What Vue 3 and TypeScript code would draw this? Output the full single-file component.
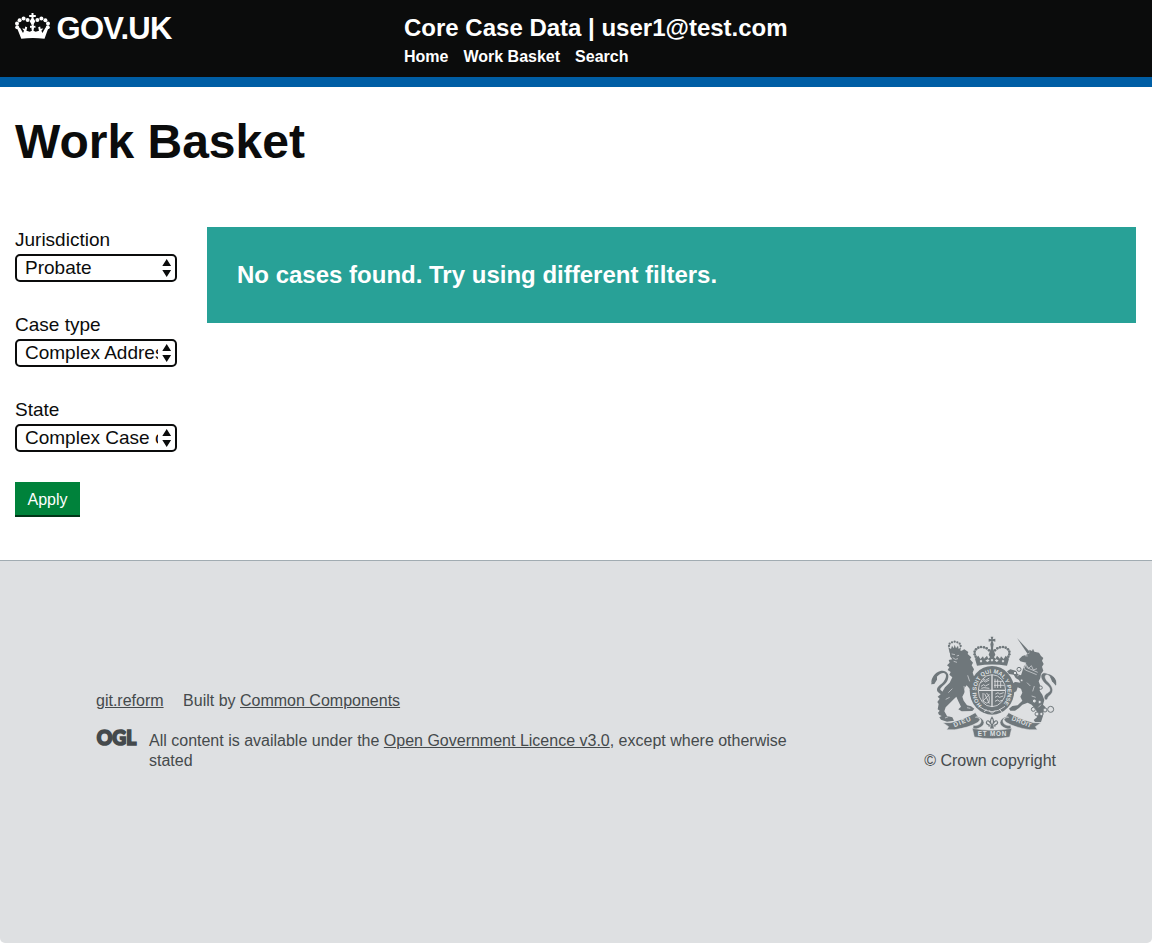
<script setup lang="ts">
import { ref } from 'vue'

interface Filter {
  id: string
  label: string
  options: string[]
}

const navigation: string[] = ['Home', 'Work Basket', 'Search']

const filters: Filter[] = [
  { id: 'jurisdiction', label: 'Jurisdiction', options: ['Probate'] },
  { id: 'case-type', label: 'Case type', options: ['Complex Address'] },
  { id: 'state', label: 'State', options: ['Complex Case created'] },
]

const selected = ref<string[]>(filters.map((f) => f.options[0]))

// Pearls along the two arches of the header crown
const crownPearls: [number, number][] = [
  [2.2, 15.2], [2, 11.6], [4.6, 8.2], [8.600, 6.5], [12.6, 8],
  [32.8, 15.2], [33, 11.6], [30.4, 8.2], [26.4, 6.5], [22.4, 8],
]

// Pearls along the crown that tops the royal shield
const shieldPearls: [number, number][] = [
  [182, 94], [179, 87], [179, 79], [183, 72], [190, 67], [198, 65], [207, 66], [215, 69], [222, 75],
  [280, 94], [283, 87], [283, 79], [279, 72], [272, 67], [264, 65], [255, 66], [247, 69], [240, 75],
]

const lionCrownPearls: [number, number][] = [
  [102, 62], [104, 55], [111, 51], [119, 49], [127, 51], [134, 55], [137, 62],
]
</script>

<template>
  <div class="page">
    <header class="header">
      <a class="logo">
        <svg class="crown" width="35" height="27" viewBox="0 0 35 27">
          <g fill="#fff">
            <circle v-for="(p, i) in crownPearls" :key="i" :cx="p[0]" :cy="p[1]" r="2" />
            <path d="M16.5 1h2v2h2.300v2h-2.300v1.200l1.800 3-1.800 3.300h-2l-1.800-3.300 1.800-3V5h-2.300V3h2.300z" />
            <path
              fill-rule="evenodd"
              d="M2.200 16.500l2.800-.8 3 5.300 1-2.200-1.900-2.300 2.800.3.300-2.300 2 .8-.8 3.400 3.400 1 2.100-1-.6-3.200-1.300.4v-2.200l1.700.2-.3-1.600h2.600l-.3 1.600 1.700-.2v2.200l-1.300-.4-.6 3.200 2.100 1 3.400-1-.8-3.400 2-.8.3 2.300 2.800-.3-1.900 2.300 1 2.200 3-5.300 2.800.8-3.700 10.200q-11.600-1.600-23.200 0z"
            />
          </g>
        </svg>
        <span class="logo-text">GOV.UK</span>
      </a>
      <div class="proposition">
        <div class="service">Core Case Data | user1@test.com</div>
        <nav class="nav">
          <a v-for="item in navigation" :key="item">{{ item }}</a>
        </nav>
      </div>
    </header>

    <main class="main">
      <h1>Work Basket</h1>
      <div class="columns">
        <form class="filters" @submit.prevent>
          <div v-for="(filter, i) in filters" :key="filter.id" class="field">
            <label :for="filter.id">{{ filter.label }}</label>
            <div class="select-wrap">
              <select :id="filter.id" v-model="selected[i]">
                <option v-for="option in filter.options" :key="option">{{ option }}</option>
              </select>
              <svg class="arrows" width="10" height="18" viewBox="0 0 10 18">
                <path d="M4.700 0l4.400 7h-8.800zM4.700 18l4.400-7h-8.800z" fill="#0b0c0c" />
              </svg>
            </div>
          </div>
          <button class="apply" type="submit">Apply</button>
        </form>
        <section class="notice">No cases found. Try using different filters.</section>
      </div>
    </main>

    <footer class="footer">
      <div class="meta">
        <div class="links"><a>git.reform</a><span class="built">Built by <a>Common Components</a></span></div>
        <div class="licence">
          <svg class="ogl" width="41" height="19" viewBox="0 0 41 19">
            <text x="0.800" y="16" textLength="39.500" lengthAdjust="spacingAndGlyphs">OGL</text>
          </svg>
          <p>All content is available under the <a>Open Government Licence v3.0</a>, except where otherwise stated</p>
        </div>
      </div>
      <div class="copyright">
        <svg class="arms" width="126" height="104" viewBox="48 32 378 312">
          <defs>
            <path id="garter" d="M201 239.400A46 54 0 1 1 261 239.400" />
          </defs>
          <g fill="#6f777b">
            <!-- lion -->
            <path d="M104 78L122 74 140 76 148 72 160 80 158 86 169 96 165 102 174 112 170 120 177 132 173 142 178 156 186 176 183 190 189 206 181 212 170 203 164 190 155 180 150 186 148 202 142 214 146 226 156 240 168 243 178 250 172 257 140 258 130 252 138 244 130 228 124 214 116 222 104 234 92 246 88 258 96 272 112 276 117 286 96 289 78 283 73 276 80 272 72 268 69 262 74 256 68 252 71 236 67 230 74 220 68 214 78 206 90 186 104 172 112 156 103 148 107 140 98 134 103 126 96 120 104 112 101 104 112 102 106 94z" />
            <path d="M78 222C86 204 68 206 66 195C65 184 78 178 85 170C94 159 96 147 88 144C78 140 63 154 50 174C46 162 60 140 76 137C93 133 104 145 99 161C95 177 73 187 76 193C82 200 98 204 92 220z" />
            <path d="M48 177L56 160 66 152 66 163 58 176z" />
            <!-- lion crown -->
            <path d="M104 82L100 66 108 71 111 61 116 69 119 58 123 69 129 61 131 71 138 66 135 80z" />
            <circle v-for="(p, i) in lionCrownPearls" :key="i" :cx="p[0]" :cy="p[1]" r="3.400" />
            <!-- unicorn -->
            <path d="M306 38L345 80 338 86z" />
            <path d="M343 84L343 73 351 77 354 70 358 79 372 82 378 92 385 98 381 106 386 116 381 124 385 136 378 146 376 158 371 168 377 184 374 196 382 208 388 224 384 238 392 246 386 258 384 272 378 290 360 290 356 284 366 276 368 262 360 250 350 238 338 232 322 238 312 248 300 256 286 256 282 250 292 242 308 240 322 226 316 214 322 202 318 190 308 186 304 198 292 204 286 196 294 186 290 176 300 170 316 172 312 164 302 158 296 148 282 146 276 138 286 132 302 136 308 146 318 150 322 138 326 124 334 112 324 110 316 108 312 102 322 92 334 88z" />
            <path d="M390 222C384 204 404 206 406 195C407 184 394 178 387 170C378 159 376 147 386 144C396 141 409 154 423 178C426 162 412 148 398 147C386 148 388 158 394 166C404 176 416 188 410 202C404 212 398 210 396 222z" stroke="#6f777b" />
            <path d="M423 181L411 168 405 154 416 156 423 168z" />
            <!-- crown above the shield -->
            <path d="M227 34h8l-2 8 8-2v9l-8-2 3 10-2 12 7 19-7 13h-6l-7-13 7-19-2-12 3-10-8 2v-9l8 2z" />
            <circle v-for="(p, i) in shieldPearls" :key="i" :cx="p[0]" :cy="p[1]" r="4" />
            <path fill-rule="evenodd" d="M180 100l10-9 6 10 8-8 3 7 9-9 4 9 11-10 11 10 4-9 9 9 3-7 8 8 6-10 10 9-6 21q-45-7-90 0zM194 107l4 5 4-5-4-4zM211 106l7 4 6-5-6-3zM260 107l4 5 4-5-4-4zM239 105l6 5 6-4-6-4zM227 104l4 5 4-5-4-4z" />
            <!-- garter -->
            <ellipse cx="231" cy="195" rx="67" ry="73" />
          </g>
          <g fill="none" stroke="#dee0e2" stroke-width="2.500">
            <ellipse cx="231" cy="196" rx="41" ry="48" />
            <path d="M231 148v97M191 195h80" stroke-width="4" />
            <path d="M198 171l8-5 5 4 12-6M198 183l8-5 5 4 12-6M204 161l8 4 11-7M199 189l8-2 16 2M240 160v28M248 162v26M257 168v20M237 168h28M237 180h31M204 203v24l19-20M209 205l14 30M214 204q12 4 8 27q-6 7-18-4M241 206l8-4 5 4 12-4M240 216l8-4 5 4 12-4M240 228l8-4 5 4 8-3" />
            <path d="M192 243q39 32 78 0M214 251l-6 9M222 256l9 8 10-8M253 251l8 10" />
          </g>
          <g class="arms-text">
            <text class="garter-text" dy="-1"><textPath href="#garter">HONI SOIT QUI MAL Y PENSE</textPath></text>
          </g>
          <!-- engraved details of the supporters -->
          <g fill="none" stroke="#dee0e2" stroke-width="2">
            <path d="M110 86l10 2M125 92l7-2M113 97l8 5 8-2M116 108l10 3M147 182l2 14M112 190l-12 12M92 222l12-6M90 278l10-4M156 247l10 2M158 150l6 18" />
            <path d="M330 91l8 1M322 122l9 12 34 14M326 114l10 13 32 14M328 128l4-12 9 13 8-8 6 13 11-4M319 142l-12 10M336 172l10 10M358 182l-5 16M350 212l12 4M378 238l-8 8" />
          </g>
          <!-- unicorn's chain -->
          <g fill="#dee0e2" stroke="#6f777b" stroke-width="3">
            <circle cx="300" cy="143" r="5" /><circle cx="312" cy="132" r="6" />
            <circle cx="320" cy="165" r="4" /><circle cx="377" cy="187" r="5" />
            <circle cx="358" cy="227" r="6" /><circle cx="374" cy="230" r="5" />
            <circle cx="355" cy="252" r="6" /><circle cx="366" cy="266" r="6" />
            <circle cx="379" cy="266" r="5" /><circle cx="390" cy="254" r="6" /><circle cx="407" cy="252" r="9" />
          </g>
          <!-- motto ribbon -->
          <g fill="#6f777b" stroke="#dee0e2" stroke-width="1.500">
            <path d="M84 292l23 0q42-10 74-30l14 21-6 8q-27 16-70 22l-24 0 6-9z" />
            <path d="M378 292l-23 0q-42-10-74-30l-14 21 6 8q27 16 70 22l24 0-6-9z" />
            <path d="M181 276q20 1 17 14q-4 12-23 10l-2 15 12-4q23-7 22-20q-3-15-23-17zM281 276q-20 1-17 14q4 12 23 10l2 15-12-4q-23-7-22-20q3-15 23-17z" />
            <path d="M172 309q59 12 118 0l-6 26q-52 10-106 0z" />
          </g>
          <g fill="none" stroke="#6f777b" stroke-width="3.500">
            <path d="M231 276q-9 12 0 24q9-12 0-24zM227 294q-9-14-13-3q0 7 10 8M235 294q9-14 13-3q0 7-10 8M220 302h22M231 300v10M226 309l5-6 5 6" />
          </g>
          <g class="arms-text">
            <text x="-27" y="7" transform="translate(141 289) rotate(-22)" textLength="54">DIEU</text>
            <text x="-31" y="7" transform="translate(320 289) rotate(22)" textLength="62">DROIT</text>
            <text x="188" y="333" textLength="86">ET MON</text>
          </g>
        </svg>
        <a>© Crown copyright</a>
      </div>
    </footer>
  </div>
</template>

<style>
html,
body {
  margin: 0;
  background: #fff;
}
</style>

<style scoped>
.page {
  display: flex;
  flex-direction: column;
  height: 943px;
  overflow: hidden;
  font-family: "Liberation Sans", Arial, sans-serif;
  color: #0b0c0c;
}
.header {
  box-sizing: border-box;
  height: 87px;
  flex: none;
  display: flex;
  padding: 12px 15px 0;
  background: #0b0c0c;
  border-bottom: 10px solid #005ea5;
  color: #fff;
}
.logo {
  display: flex;
  width: 389px;
  flex: none;
}
.logo-text {
  margin: 1px 0 0 6.500px;
  font-size: 31px;
  line-height: 32px;
  font-weight: 700;
  letter-spacing: -0.7px;
}
.service {
  margin-top: 1px;
  font-size: 24px;
  line-height: 30px;
  font-weight: 700;
}
.nav {
  display: flex;
  gap: 15px;
  margin-top: 4px;
  font-size: 16px;
  line-height: 20px;
  font-weight: 700;
}
.main {
  box-sizing: border-box;
  height: 473px;
  flex: none;
  padding: 30px 16px 0 15px;
}
h1 {
  margin: 0;
  font-size: 48px;
  line-height: 50px;
  font-weight: 700;
}
.columns {
  display: flex;
  align-items: flex-start;
  gap: 30px;
  margin-top: 60px;
}
.filters {
  width: 162px;
  flex: none;
}
.field {
  height: 85px;
}
.field label {
  display: block;
  height: 27px;
  font-size: 19px;
  line-height: 25px;
}
.select-wrap {
  position: relative;
}
select {
  display: block;
  box-sizing: border-box;
  width: 162px;
  height: 28px;
  padding: 0 17px 0 8px;
  appearance: none;
  border: 2px solid #0b0c0c;
  border-radius: 5px;
  background: #fff;
  color: #0b0c0c;
  font: 19px/24px "Liberation Sans", Arial, sans-serif;
}
.arrows {
  position: absolute;
  top: 5px;
  right: 5px;
  pointer-events: none;
}
.apply {
  display: block;
  width: 65px;
  height: 35px;
  padding: 0;
  border: 0;
  background: #00823b;
  box-shadow: inset 0 -2px 0 #003618;
  color: #fff;
  font: 16px/35px "Liberation Sans", Arial, sans-serif;
}
.notice {
  flex: 1;
  padding: 30px;
  background: #28a197;
  color: #fff;
  font-size: 24px;
  line-height: 36px;
  font-weight: 700;
}
.footer {
  flex: 1;
  display: flex;
  justify-content: space-between;
  padding: 75px 96px 0;
  background: #dee0e2;
  border-top: 1px solid #a1acb2;
  border-radius: 0 0 5px 5px;
  color: #454a4c;
  font-size: 16px;
  line-height: 20px;
}
.footer .meta a {
  text-decoration: underline;
}
.meta {
  width: 710px;
  padding-top: 55px;
}
.built {
  margin-left: 19.500px;
}
.licence {
  display: flex;
  gap: 12px;
  margin-top: 20px;
}
.licence p {
  margin: 0;
}
.ogl {
  flex: none;
  margin-top: -2px;
  overflow: visible;
}
.ogl text {
  font: 900 20px Lato, sans-serif;
  fill: #454a4c;
  stroke: #454a4c;
  stroke-width: 1.700px;
}
.copyright {
  display: flex;
  flex-direction: column;
  align-items: flex-end;
}
.arms {
  display: block;
  margin: 0 -1px 11px 0;
  overflow: visible;
}
.arms-text {
  font: 700 19px "Liberation Sans", Arial, sans-serif;
  fill: #dee0e2;
}
.garter-text {
  font-size: 17px;
}
</style>
